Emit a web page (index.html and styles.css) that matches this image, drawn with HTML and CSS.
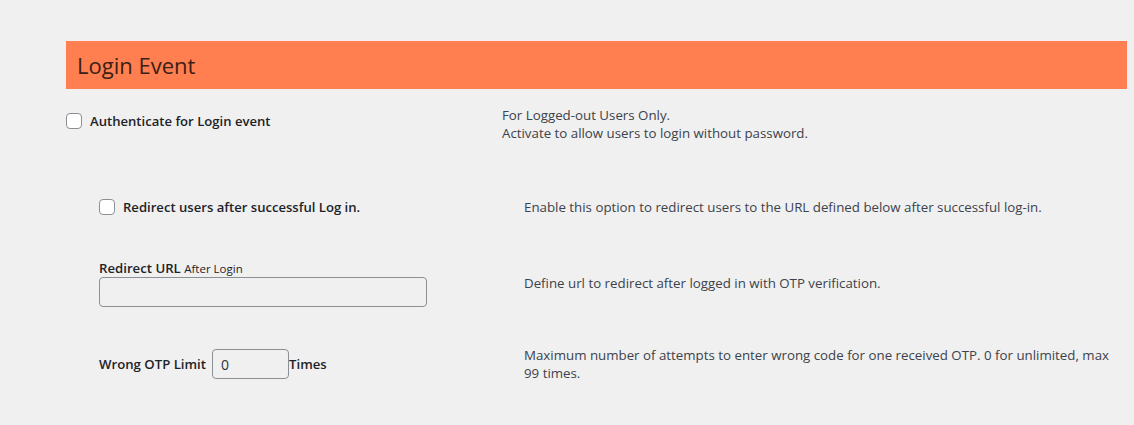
FILE: index.html
```html
<!doctype html>
<html>
  <head>
    <title>Login Event</title>
    <meta charset="utf-8">
    <link rel="stylesheet" href="styles.css">
  </head>
  <body>
    <div class="page">
      <h2 class="bar">Login Event</h2>
      <div class="row top">
        <label class="check">
          <input type="checkbox">
          <span>Authenticate for Login event</span>
        </label>
        <p class="desc">
          For Logged-out Users Only.<br>
          Activate to allow users to login without password.
        </p>
      </div>
      <div class="sub">
        <div class="row first">
          <label class="check">
            <input type="checkbox">
            <span>Redirect users after successful Log in.</span>
          </label>
          <p class="desc">Enable this option to redirect users to the URL defined below after successful log-in.</p>
        </div>
        <div class="row url-row">
          <div class="field">
            <label class="name" for="redirect">Redirect URL <small>After Login</small></label>
            <input type="text" id="redirect" class="text url">
          </div>
          <p class="desc">Define url to redirect after logged in with OTP verification.</p>
        </div>
        <div class="row limit-row">
          <label class="name limit">
            Wrong OTP Limit
            <input type="text" class="text num" value="0">Times
          </label>
          <p class="desc">Maximum number of attempts to enter wrong code for one received OTP. 0 for unlimited, max 99 times.</p>
        </div>
      </div>
    </div>
  </body>
</html>
```

FILE: styles.css
```css
html, body {
  margin: 0;
  background: #f0f0f1;
}
body {
  font-family: "Open Sans", "Noto Sans", sans-serif;
  font-size: 13.3px;
  color: #3c434a;
}
.page {
  width: 1061px;
  padding: 41px 0 0 66px;
}
.bar {
  margin: 0;
  height: 48px;
  display: flex;
  align-items: center;
  padding: 0 11px;
  background: #ff7f50;
  color: #3b2016;
  font-size: 22px;
  font-weight: 400;
}
.row {
  display: grid;
  align-items: start;
}
.top {
  grid-template-columns: 436px 1fr;
  margin-top: 17px;
}
.sub {
  padding-left: 33px;
}
.sub .row {
  grid-template-columns: 425px 588px;
}
.first {
  margin-top: 56px;
}
.url-row {
  margin-top: 44px;
}
.limit-row {
  margin-top: 39px;
}
.desc {
  margin: 0;
  line-height: 18px;
}
.url-row .desc {
  margin-top: 14px;
}
.check {
  display: flex;
  align-items: center;
  gap: 8px;
  font-size: 13.1px;
  font-weight: 600;
  color: #1d2327;
}
.top .check {
  margin-top: 6px;
}
.check input {
  appearance: none;
  margin: 0;
  width: 16px;
  height: 16px;
  border: 1px solid #8c8f94;
  border-radius: 4px;
  background: #fff;
}
.name {
  display: block;
  font-size: 13.2px;
  font-weight: 600;
  line-height: 17px;
  color: #1d2327;
}
.name small {
  font-size: 11.5px;
  font-weight: 400;
}
.text {
  box-sizing: border-box;
  height: 30px;
  margin: 0;
  padding: 0 8px;
  font: inherit;
  font-size: 14px;
  font-weight: 400;
  color: #2c3338;
  background: #f0f0f1;
  border: 1px solid #8c8f94;
  border-radius: 4px;
}
.url {
  display: block;
  width: 328px;
}
.limit {
  display: flex;
  align-items: center;
  margin-top: 3px;
}
.num {
  width: 77px;
  margin-left: 6px;
}
```
